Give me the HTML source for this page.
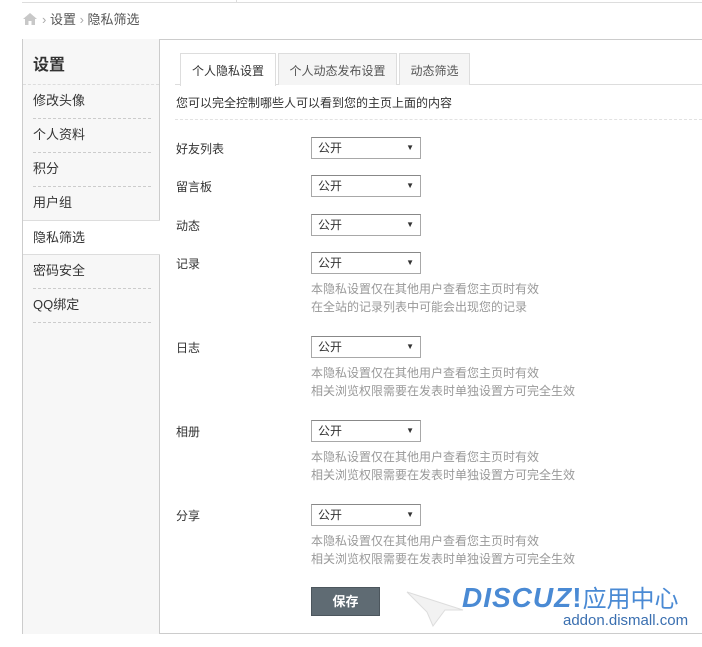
<!DOCTYPE html>
<html><head><meta charset="utf-8"><style>
body{margin:0;width:702px;height:647px;background:#fff;font-family:"Liberation Sans","Noto Sans CJK SC",sans-serif;font-size:12px;color:#333;position:relative;overflow:hidden}
.a{position:absolute}
.sb{left:22px;top:39px;width:136px;height:595px;background:#f7f7f7;border-left:1px solid #ccc;border-right:1px solid #ccc}
.it{position:absolute;left:10px;width:118px;font-size:13px;color:#333;border-bottom:1px dashed #ccc;height:33px;line-height:32px}
.sel{position:absolute;left:311px;width:108px;height:20px;border:1px solid #a8a8a8;border-top-color:#888;line-height:20px;font-size:12px;color:#333;text-indent:6px}
.sel:after{content:"▼";position:absolute;right:6px;top:0;font-size:8px}
.lb{position:absolute;left:176px;font-size:12px;color:#333}
.h{position:absolute;left:311px;font-size:12px;color:#999;line-height:18px}
.tab{position:absolute;top:53px;height:31px;line-height:34px;border:1px solid #ddd;border-bottom:none;background:#f5f5f5;text-align:center;font-size:12px;color:#555}
</style></head><body>
<div class="a" style="left:22px;top:0;width:680px;height:2px;border-bottom:1px solid #ddd"></div>
<div class="a" style="left:236px;top:0;width:1px;height:3px;background:#ddd"></div>
<svg class="a" style="left:23px;top:13px" width="14" height="12"><path d="M7 0 L14 6 L12 6 L12 12 L8.5 12 L8.5 8 L5.5 8 L5.5 12 L2 12 L2 6 L0 6 Z" fill="#c8c8c8"/></svg>
<div class="a" style="left:42px;top:11px;font-size:13px;color:#555;line-height:18px"><span style="color:#aaa">›</span> 设置 <span style="color:#aaa">›</span> 隐私筛选</div>
<div class="a" style="left:22px;top:39px;width:680px;border-top:1px solid #ccc"></div>
<div class="a" style="left:22px;top:633px;width:680px;border-top:1px solid #ccc"></div>
<div class="a sb">
<div class="a" style="left:10px;top:12px;font-size:16px;font-weight:bold;color:#333">设置</div>
<div class="a" style="top:45px;left:0;width:136px;border-top:1px dashed #ddd"></div>
<div class="it" style="top:46px">修改头像</div>
<div class="it" style="top:80px">个人资料</div>
<div class="it" style="top:114px">积分</div>
<div class="it" style="top:148px;border-bottom:none">用户组</div>
<div class="a" style="left:0;top:181px;width:137px;height:33px;background:#fff;border-top:1px solid #ddd;border-bottom:1px solid #ddd;line-height:33px;font-size:13px;text-indent:10px">隐私筛选</div>
<div class="it" style="top:216px">密码安全</div>
<div class="it" style="top:250px">QQ绑定</div>
</div>
<div class="a" style="left:175px;top:84px;width:527px;border-top:1px solid #ddd"></div>
<div class="tab" style="left:180px;width:94px;background:#fff;height:32px;color:#333">个人隐私设置</div>
<div class="tab" style="left:278px;width:117px">个人动态发布设置</div>
<div class="tab" style="left:399px;width:69px">动态筛选</div>
<div class="a" style="left:176px;top:94px;color:#333">您可以完全控制哪些人可以看到您的主页上面的内容</div>
<div class="a" style="left:175px;top:119px;width:527px;border-top:1px dashed #e2e2e2"></div>
<div class="lb" style="top:140px">好友列表</div><div class="sel" style="top:137px">公开</div>
<div class="lb" style="top:178px">留言板</div><div class="sel" style="top:175px">公开</div>
<div class="lb" style="top:217px">动态</div><div class="sel" style="top:214px">公开</div>
<div class="lb" style="top:255px">记录</div><div class="sel" style="top:252px">公开</div>
<div class="h" style="top:280px">本隐私设置仅在其他用户查看您主页时有效<br>在全站的记录列表中可能会出现您的记录</div>
<div class="lb" style="top:339px">日志</div><div class="sel" style="top:336px">公开</div>
<div class="h" style="top:364px">本隐私设置仅在其他用户查看您主页时有效<br>相关浏览权限需要在发表时单独设置方可完全生效</div>
<div class="lb" style="top:423px">相册</div><div class="sel" style="top:420px">公开</div>
<div class="h" style="top:448px">本隐私设置仅在其他用户查看您主页时有效<br>相关浏览权限需要在发表时单独设置方可完全生效</div>
<div class="lb" style="top:507px">分享</div><div class="sel" style="top:504px">公开</div>
<div class="h" style="top:532px">本隐私设置仅在其他用户查看您主页时有效<br>相关浏览权限需要在发表时单独设置方可完全生效</div>
<div class="a" style="left:311px;top:587px;width:69px;height:29px;background:#5f6b73;border:1px solid #4c565d;box-sizing:border-box;color:#fff;font-weight:bold;font-size:13px;text-align:center;line-height:27px">保存</div>
<svg class="a" style="left:405px;top:588px" width="60" height="40"><path d="M2 4 L58 22 L40 22 L28 38 L22 24 Z" fill="#f2f2f2" stroke="#ddd"/></svg>
<div class="a" style="left:462px;top:583px;font-size:28px;font-style:italic;font-weight:bold;color:#4a8ad4;line-height:30px;letter-spacing:1px">DISCUZ<span style="font-style:normal">!</span><span style="font-weight:normal;font-style:normal;font-size:24px;letter-spacing:0">应用中心</span></div>
<div class="a" style="left:563px;top:612px;font-size:15px;color:#3a6fb0">addon.dismall.com</div>
</body></html>
